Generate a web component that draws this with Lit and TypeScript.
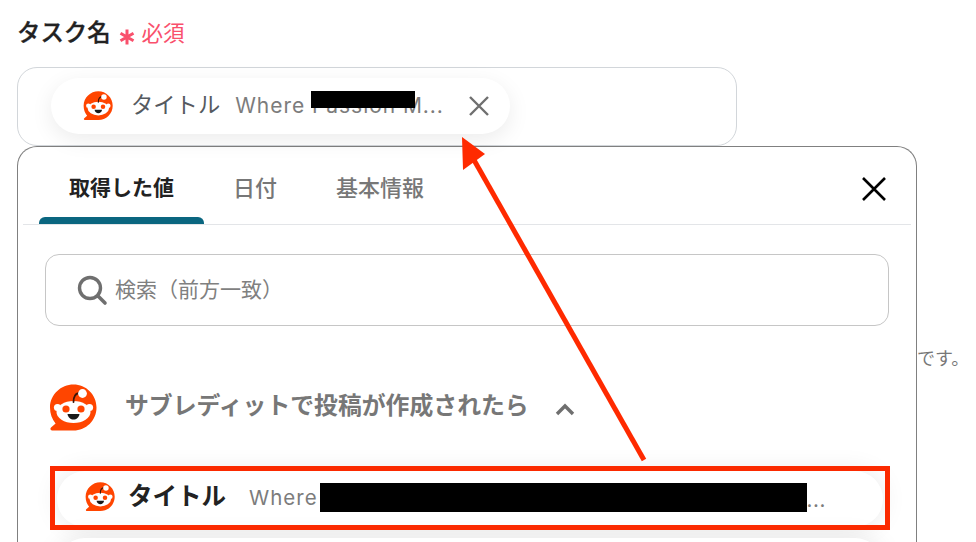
import { LitElement, html, css, svg } from "lit";
import { customElement } from "lit/decorators.js";

const reddit = (cls: string) => html`<svg class=${cls} viewBox="0 0 48 48" aria-hidden="true">
  <path fill="#ff4500" d="M24.5 0.5C37 0.5 47.5 10.5 47.5 23.5C47.5 36.5 37 46.5 24.5 46.5H3C1.4 46.5 .8 44.6 2 43.6L6.6 39.4C3 35.2 1 29.6 1 23.5C1 10.5 12 .5 24.5 .5Z"/>
  <ellipse cx="24.5" cy="28" rx="17" ry="11" fill="#fff"/>
  <circle cx="8.5" cy="23.5" r="3.6" fill="#fff"/><circle cx="40.5" cy="23.5" r="3.6" fill="#fff"/>
  <path d="M24.5 18C24.5 12.5 26.5 9 31 9" fill="none" stroke="#3a1508" stroke-width="1.8" stroke-linecap="round"/>
  <circle cx="33.5" cy="9.5" r="4.4" fill="#fff"/>
  <circle cx="17" cy="25" r="3.6" fill="#ff4500"/><circle cx="32" cy="25" r="3.6" fill="#ff4500"/>
  <path d="M18.5 30H30.5C30 33.5 27.5 35.5 24.5 35.5C21.5 35.5 19 33.5 18.5 30Z" fill="#1a1a1a"/>
</svg>`;

@customElement("app-root")
export class AppRoot extends LitElement {
  static styles = css`
    :host { display: block; position: relative; width: 976px; height: 542px; overflow: hidden; background: #fff;
      font-family: Inter, "Noto Sans CJK JP", sans-serif; color: #222; }
    .label { display: flex; align-items: center; height: 26px; padding: 19px 0 0 17px; gap: 8px; }
    .label b { font: 500 23.4px/26px "Noto Sans CJK JP", sans-serif; color: #222; -webkit-text-stroke: .3px #222; margin-top: -2px; }
    .req { display: flex; align-items: center; gap: 7px; font: 400 21.5px/26px "Noto Sans CJK JP", sans-serif; color: #f9506c; }
    .star { width: 16px; height: 16px; margin-top: 9px; }
    .field { box-sizing: border-box; width: 720px; height: 79px; margin: 22px 0 0 17px; border: 1px solid #d2d6da; border-radius: 20px; padding: 10px 0 0 33px; }
    .chip { box-sizing: border-box; display: flex; align-items: center; width: 459px; height: 56px; border-radius: 28px; background: #fff;
      box-shadow: 0 6px 22px rgba(0,0,0,.08); padding: 0 17px 0 32px; position: relative; }
    .ico30 { width: 30px; height: 30px; flex: none; }
    .ico48 { width: 48px; height: 48px; flex: none; }
    .chip .name { margin-left: 18px; margin-top: -6px; font: 400 22.3px/1 "Noto Sans CJK JP", sans-serif; color: #555a60; white-space: nowrap; }
    .chip .val { margin-left: 15px; font-size: 21px; line-height: 1; letter-spacing: .95px; color: #7c7c7c; white-space: nowrap; margin-top: -1px; }
    .chip .x { width: 26px; height: 26px; margin-left: auto; margin-right: 1px; flex: none; }
    .redact { background: #000; }
    .chip .redact { position: absolute; left: 260px; top: 13px; width: 104px; height: 17px; }
    .row { display: flex; align-items: flex-start; }
    .popup { box-sizing: border-box; width: 900px; height: 420px; margin-left: 17px; border: 1px solid #808080; border-bottom: 0; border-radius: 20px 20px 0 0; padding: 0 5px; background: #fff; flex: none; }
    .side { font: 400 18px/20px "Noto Sans CJK JP", sans-serif; color: #777; margin-top: 201px; white-space: nowrap; }
    .tabs { display: flex; align-items: center; height: 77px; border-bottom: 1px solid #e3e5e8; position: relative; }
    .tab { font: 500 22px/1 "Noto Sans CJK JP", sans-serif; color: #777; white-space: nowrap; margin-top: 1px; }
    .tab.on { color: #222; margin-left: 46px; font-size: 21px; font-weight: 700; }
    .tab.two { margin-left: 59px; }
    .tab.three { margin-left: 59px; }
    .tabs .bar { position: absolute; left: 16px; bottom: 0; width: 165px; height: 7px; background: #0a6680; border-radius: 6px 6px 0 0; }
    .tabs .close { width: 30px; height: 30px; margin-left: auto; margin-right: 22px; margin-top: 6px; }
    .search { box-sizing: border-box; display: flex; align-items: center; width: 844px; height: 72px; margin: 29px 0 0 22px; border: 1px solid #c6c6c6; border-radius: 14px; padding-left: 30px; gap: 7px; }
    .search svg { width: 32px; height: 32px; flex: none; }
    .search span { font: 400 21px/1 "Noto Sans CJK JP", sans-serif; color: #808080; margin-top: -4px; }
    .group { display: flex; align-items: center; margin: 58px 0 0 26px; height: 48px; }
    .group .t { margin-left: 28px; margin-top: -8px; font: 700 23.85px/1 "Noto Sans CJK JP", sans-serif; color: #777; white-space: nowrap; }
    .group svg.chev { width: 22px; height: 14px; margin-left: 25px; flex: none; margin-top: 2px; }
    .item { box-sizing: border-box; display: flex; align-items: center; width: 826px; height: 56px; margin: 39px 0 0 34px; border-radius: 28px; background: #fff;
      box-shadow: 0 0 26px rgba(0,0,0,.09); padding-left: 28px; position: relative; }
    .item .ico30 { margin-top: -4px; }
    .item .name { margin-left: 13px; margin-top: -7px; font: 700 24.5px/1 "Noto Sans CJK JP", sans-serif; color: #222; white-space: nowrap; }
    .item .val { margin-left: 23px; font-size: 20.5px; line-height: 1; letter-spacing: 1px; color: #7c7c7c; margin-top: -1px; }
    .item .redact { width: 487px; height: 29px; margin-left: 2px; flex: none; margin-top: -4px; }
    .item .dots { font-size: 20.5px; letter-spacing: .6px; color: #7c7c7c; margin-left: 0; margin-top: 1px; }
    .item.next { margin-top: 11px; }
    .hl { position: absolute; left: 50px; top: 466px; width: 840px; height: 64px; box-sizing: border-box; border: 5px solid #fb2a00; }
    .arrow { position: absolute; left: 0; top: 0; width: 976px; height: 542px; pointer-events: none; }
  `;

  render() {
    return html`
      <div class="label"><b>タスク名</b>
        <span class="req"><svg class="star" viewBox="0 0 16 16"><path d="M8 .5V15.5M1.5 4.2L14.5 11.8M14.5 4.2L1.5 11.8" stroke="#f9506c" stroke-width="3" fill="none"/></svg>必須</span>
      </div>
      <div class="field">
        <div class="chip">
          ${reddit("ico30")}
          <span class="name">タイトル</span>
          <span class="val">Where Passion M...</span>
          <div class="redact"></div>
          <svg class="x" viewBox="0 0 26 26"><path d="M4 4L22 22M22 4L4 22" stroke="#6f6f6f" stroke-width="2.4" fill="none"/></svg>
        </div>
      </div>
      <div class="row">
        <div class="popup">
          <div class="tabs">
            <span class="tab on">取得した値</span><span class="tab two">日付</span><span class="tab three">基本情報</span>
            <div class="bar"></div>
            <svg class="close" viewBox="0 0 30 30"><path d="M4 4L26 26M26 4L4 26" stroke="#000" stroke-width="2.6" fill="none"/></svg>
          </div>
          <div class="search">
            <svg viewBox="0 0 32 32"><circle cx="14" cy="14" r="10.5" fill="none" stroke="#6f6f6f" stroke-width="3.4"/><path d="M22 22L29 29" stroke="#6f6f6f" stroke-width="3.6" stroke-linecap="round"/></svg>
            <span>検索（前方一致）</span>
          </div>
          <div class="group">
            ${reddit("ico48")}
            <span class="t">サブレディットで投稿が作成されたら</span>
            <svg class="chev" viewBox="0 0 22 14"><path d="M3 12L11 4L19 12" fill="none" stroke="#6f6f6f" stroke-width="3.4"/></svg>
          </div>
          <div class="item">
            ${reddit("ico30")}
            <span class="name">タイトル</span>
            <span class="val">Where</span>
            <div class="redact"></div>
            <span class="dots">...</span>
          </div>
          <div class="item next"></div>
        </div>
        <div class="side">です。</div>
      </div>
      <div class="hl"></div>
      <svg class="arrow" viewBox="0 0 976 542">${svg`<path d="M644 460L474 160" stroke="#ff2a00" stroke-width="5" fill="none"/><path d="M462 137L485 154L463 170Z" fill="#ff2a00"/>`}</svg>
    `;
  }
}
